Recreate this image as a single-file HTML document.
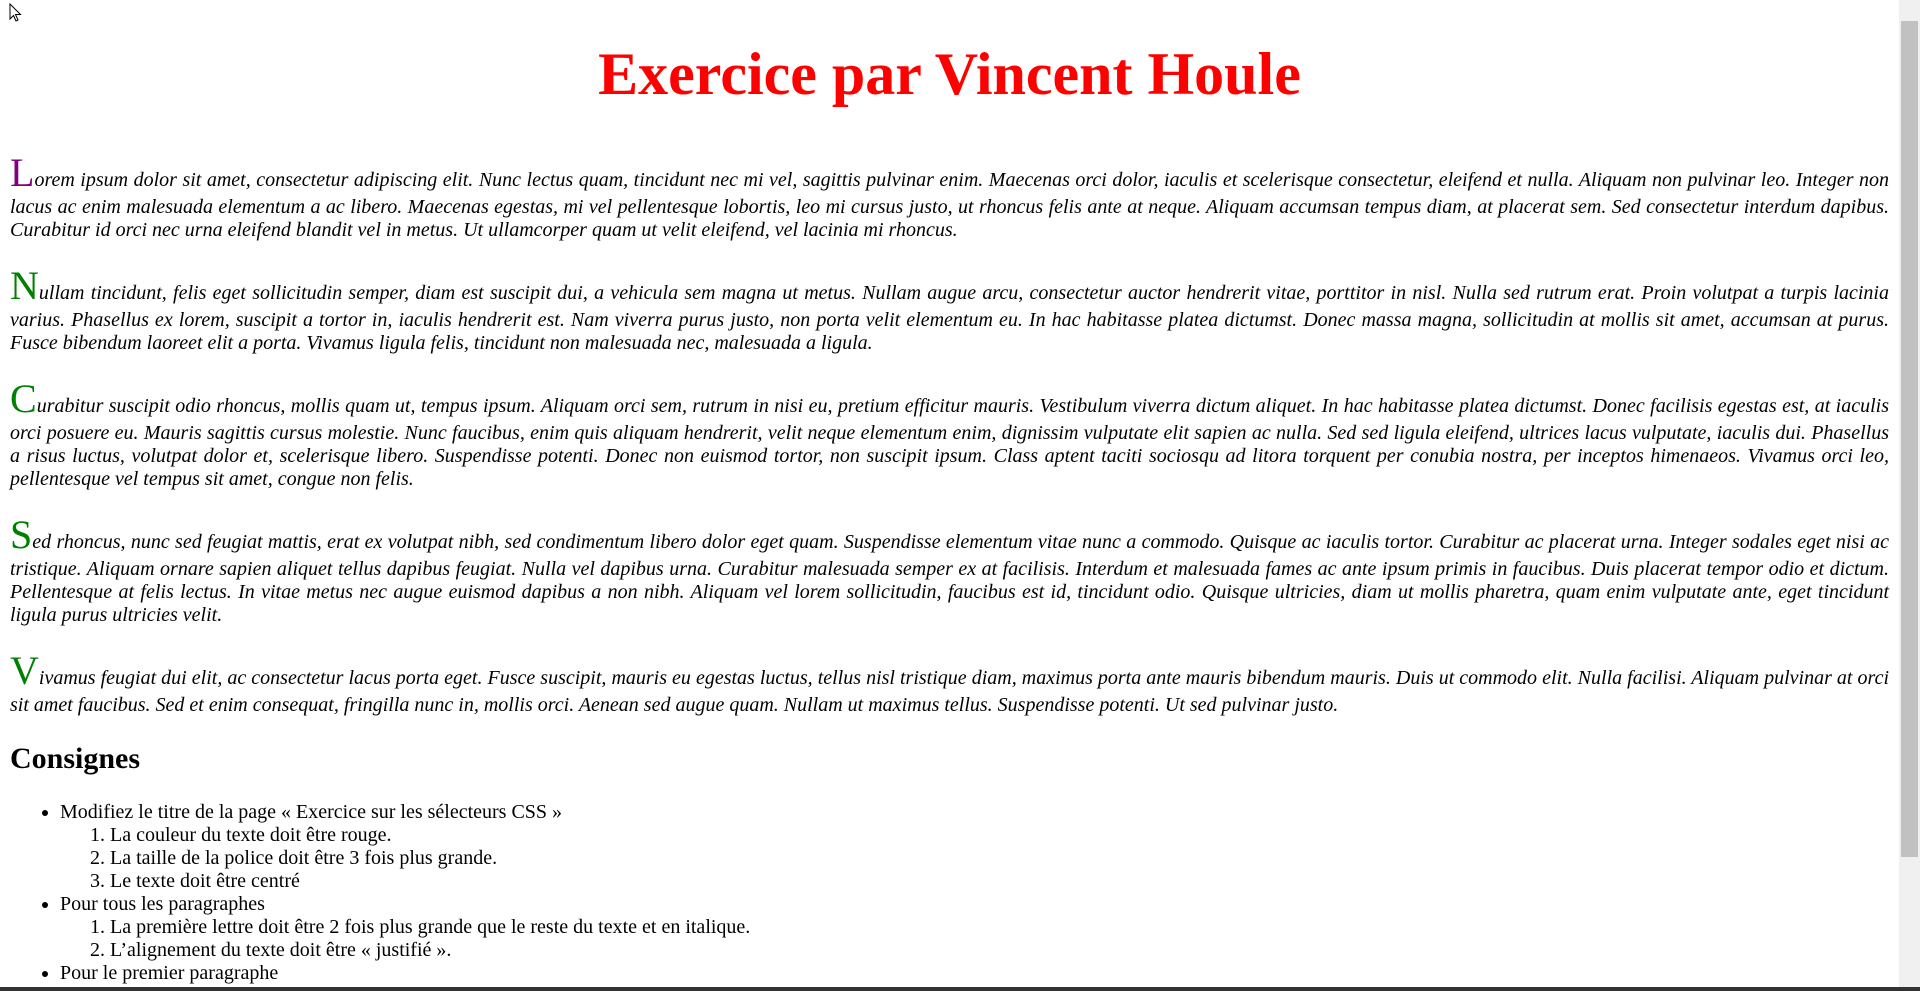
<!DOCTYPE html>
<html><head><meta charset="utf-8">
<style>
html,body{margin:0;padding:0;overflow:hidden;background:#fff}
body{width:1899px;height:991px;font-family:"Liberation Serif","Times New Roman",serif;font-size:20px;color:#000}
.wrap{padding:0 10px;display:flow-root}
h1{color:red;font-size:60px;text-align:center;margin:40px 0 40px;line-height:69px}
p{font-style:italic;text-align:justify;margin:20px 0;line-height:normal}
p::first-letter{font-size:40px;font-style:normal;color:green;line-height:normal}
p.first::first-letter{color:purple}
h2{font-size:30px;margin:25px 0 25px;line-height:34px}
ul{padding-left:50px;margin:20px 0;line-height:23px}
ol{padding-left:50px;margin:0}
.sb{position:fixed;left:1899px;top:0;width:21px;height:991px;background:#f0f0f0}
.th{position:fixed;left:1901px;top:21px;width:17px;height:836px;background:#c1c1c1}
.bar{position:fixed;left:0;top:987px;width:1920px;height:4px;background:#333}
.cur{position:fixed;left:9px;top:3px}
</style></head><body>
<div class="wrap">
<h1>Exercice par Vincent Houle</h1>
<p class="first">Lorem ipsum dolor sit amet, consectetur adipiscing elit. Nunc lectus quam, tincidunt nec mi vel, sagittis pulvinar enim. Maecenas orci dolor, iaculis et scelerisque consectetur, eleifend et nulla. Aliquam non pulvinar leo. Integer non lacus ac enim malesuada elementum a ac libero. Maecenas egestas, mi vel pellentesque lobortis, leo mi cursus justo, ut rhoncus felis ante at neque. Aliquam accumsan tempus diam, at placerat sem. Sed consectetur interdum dapibus. Curabitur id orci nec urna eleifend blandit vel in metus. Ut ullamcorper quam ut velit eleifend, vel lacinia mi rhoncus.</p>
<p>Nullam tincidunt, felis eget sollicitudin semper, diam est suscipit dui, a vehicula sem magna ut metus. Nullam augue arcu, consectetur auctor hendrerit vitae, porttitor in nisl. Nulla sed rutrum erat. Proin volutpat a turpis lacinia varius. Phasellus ex lorem, suscipit a tortor in, iaculis hendrerit est. Nam viverra purus justo, non porta velit elementum eu. In hac habitasse platea dictumst. Donec massa magna, sollicitudin at mollis sit amet, accumsan at purus. Fusce bibendum laoreet elit a porta. Vivamus ligula felis, tincidunt non malesuada nec, malesuada a ligula.</p>
<p>Curabitur suscipit odio rhoncus, mollis quam ut, tempus ipsum. Aliquam orci sem, rutrum in nisi eu, pretium efficitur mauris. Vestibulum viverra dictum aliquet. In hac habitasse platea dictumst. Donec facilisis egestas est, at iaculis orci posuere eu. Mauris sagittis cursus molestie. Nunc faucibus, enim quis aliquam hendrerit, velit neque elementum enim, dignissim vulputate elit sapien ac nulla. Sed sed ligula eleifend, ultrices lacus vulputate, iaculis dui. Phasellus a risus luctus, volutpat dolor et, scelerisque libero. Suspendisse potenti. Donec non euismod tortor, non suscipit ipsum. Class aptent taciti sociosqu ad litora torquent per conubia nostra, per inceptos himenaeos. Vivamus orci leo, pellentesque vel tempus sit amet, congue non felis.</p>
<p>Sed rhoncus, nunc sed feugiat mattis, erat ex volutpat nibh, sed condimentum libero dolor eget quam. Suspendisse elementum vitae nunc a commodo. Quisque ac iaculis tortor. Curabitur ac placerat urna. Integer sodales eget nisi ac tristique. Aliquam ornare sapien aliquet tellus dapibus feugiat. Nulla vel dapibus urna. Curabitur malesuada semper ex at facilisis. Interdum et malesuada fames ac ante ipsum primis in faucibus. Duis placerat tempor odio et dictum. Pellentesque at felis lectus. In vitae metus nec augue euismod dapibus a non nibh. Aliquam vel lorem sollicitudin, faucibus est id, tincidunt odio. Quisque ultricies, diam ut mollis pharetra, quam enim vulputate ante, eget tincidunt ligula purus ultricies velit.</p>
<p>Vivamus feugiat dui elit, ac consectetur lacus porta eget. Fusce suscipit, mauris eu egestas luctus, tellus nisl tristique diam, maximus porta ante mauris bibendum mauris. Duis ut commodo elit. Nulla facilisi. Aliquam pulvinar at orci sit amet faucibus. Sed et enim consequat, fringilla nunc in, mollis orci. Aenean sed augue quam. Nullam ut maximus tellus. Suspendisse potenti. Ut sed pulvinar justo.</p>
<h2>Consignes</h2>
<ul>
<li>Modifiez le titre de la page « Exercice sur les sélecteurs CSS »
<ol><li>La couleur du texte doit être rouge.</li><li>La taille de la police doit être 3 fois plus grande.</li><li>Le texte doit être centré</li></ol></li>
<li>Pour tous les paragraphes
<ol><li>La première lettre doit être 2 fois plus grande que le reste du texte et en italique.</li><li>L’alignement du texte doit être « justifié ».</li></ol></li>
<li>Pour le premier paragraphe</li>
<li>Pour les autres paragraphes</li>
</ul>
</div>
<svg class="cur" width="14" height="20" viewBox="0 0 14 20"><path d="M1 1 L1 16 L4.5 12.5 L7 18 L9 17 L6.5 11.5 L11.5 11.5 Z" fill="#fff" stroke="#000" stroke-width="1"/></svg>
<div class="sb"></div><div class="th"></div>
<div class="bar"></div>
</body></html>
